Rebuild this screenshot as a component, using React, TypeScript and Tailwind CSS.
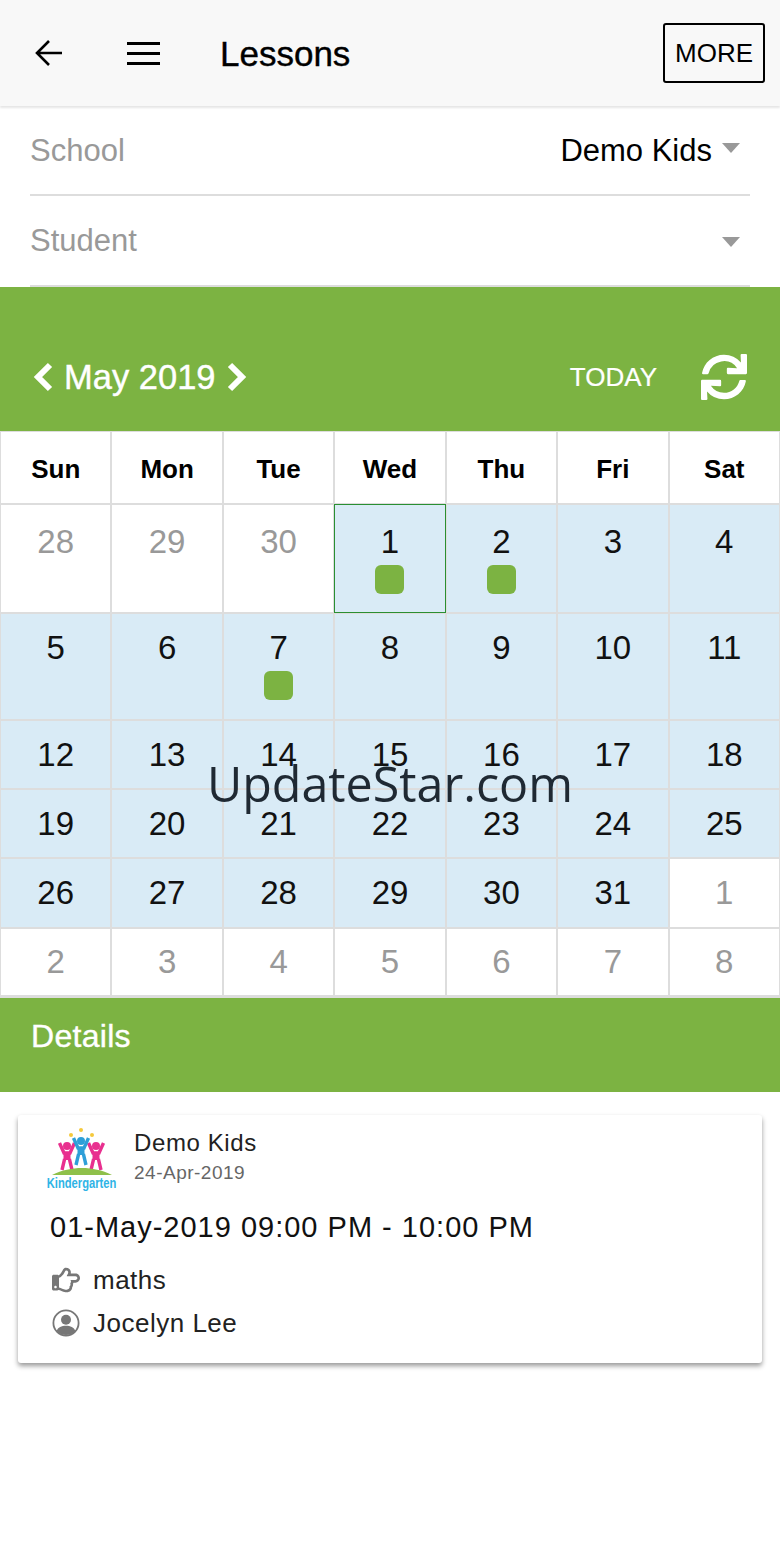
import { FaRegHandPointRight, FaSync } from "react-icons/fa";

type Day = { label: number; muted?: boolean; lesson?: boolean; selected?: boolean };

const weekDays = ["Sun", "Mon", "Tue", "Wed", "Thu", "Fri", "Sat"];

const range = (from: number, to: number, muted = false): Day[] =>
  Array.from({ length: to - from + 1 }, (_, i) => ({ label: from + i, muted }));

const days: Day[] = [...range(28, 30, true), ...range(1, 31), ...range(1, 8, true)].map((d, i) =>
  !d.muted && (d.label === 1 || d.label === 2 || d.label === 7)
    ? { ...d, lesson: true, selected: d.label === 1 && i === 3 }
    : d
);

// heights and number offsets differ per week row
const rowStyles = [
  "h-[107px] pt-[15px]",
  "h-[105px] pt-[12px]",
  "h-[67px] pt-[12px]",
  "h-[67px] pt-[12px]",
  "h-[68px] pt-[12px]",
  "h-[66px] pt-[11px]",
];

const Kid = ({ x, y, color }: { x: number; y: number; color: string }) => (
  <g transform={`translate(${x} ${y})`} stroke={color} fill="none" strokeWidth="3.4">
    <circle cx="0" cy="4" r="4" fill={color} stroke="none" />
    <path d="M-7.5 1L-3 11H3L7.5 1" />
    <path d="M0 10V18" strokeWidth="7" />
    <path d="M-2.4 17L-5 28M2.4 17L5 28" />
  </g>
);

const KidsLogo = () => (
  <div className="flex w-[64px] flex-col items-center">
    <svg width="64" height="48" viewBox="0 0 64 48">
      <circle cx="21" cy="7" r="2" fill="#f5c93c" />
      <circle cx="31" cy="2" r="2" fill="#f5c93c" />
      <circle cx="42" cy="7" r="2" fill="#f5c93c" />
      <Kid x={17} y={14} color="#e8308f" />
      <Kid x={46} y={14} color="#e8308f" />
      <Kid x={31} y={9} color="#2e9fd8" />
      <path d="M2 47c10-5 20-7 30-7s20 2 30 7z" fill="#8fc04a" />
    </svg>
    <span className="scale-x-[0.8] whitespace-nowrap text-[14px] leading-[15px] font-bold text-[#2fb4e6]">
      Kindergarten
    </span>
  </div>
);

const PersonIcon = () => (
  <svg width="28" height="28" viewBox="0 0 28 28">
    <circle cx="14" cy="14" r="12.6" fill="none" stroke="#777" strokeWidth="1.8" />
    <circle cx="14" cy="10.8" r="5" fill="#777" />
    <path d="M4.6 22c1.4-3.8 5-5.2 9.4-5.2s8 1.4 9.4 5.2c-2.3 2.6-5.6 4-9.4 4s-7.1-1.4-9.4-4z" fill="#777" />
  </svg>
);

const Caret = () => (
  <span className="h-0 w-0 border-x-[9px] border-t-[10px] border-x-transparent border-t-[#999]" />
);

const Chevron = ({ right }: { right?: boolean }) => (
  <svg width="21" height="30" viewBox="0 0 21 30" fill="none" stroke="#fff" strokeWidth="6">
    <path d={right ? "M4 3l12 12L4 27" : "M17 3L5 15l12 12"} />
  </svg>
);

const App = () => {
  return (
    <div className="relative h-[1560px] w-[780px] overflow-hidden bg-white font-['Liberation_Sans',sans-serif] text-black">
      <header className="relative z-10 flex h-[106px] items-center bg-[#f8f8f8] pl-[35px] pr-[15px] shadow-[0_2px_2px_rgba(0,0,0,0.1)]">
        <svg width="28" height="28" viewBox="0 0 28 28" fill="none" stroke="#000" strokeWidth="2.6">
          <path d="M27 14H3M14 2L2 14l12 12" />
        </svg>
        <div className="ml-[64px] flex w-[33px] flex-col gap-[7px]">
          <span className="h-[3px] bg-black" />
          <span className="h-[3px] bg-black" />
          <span className="h-[3px] bg-black" />
        </div>
        <h1 className="ml-[60px] text-[35px] leading-none [-webkit-text-stroke:0.4px_#000]">Lessons</h1>
        <button className="ml-auto h-[60px] w-[102px] rounded-[3px] border-2 border-black text-center text-[26px]">
          MORE
        </button>
      </header>

      <section className="h-[181px] px-[30px]">
        <div className="flex h-[90px] items-center justify-between border-b-2 border-[#ddd] pt-[2px] text-[31px]">
          <span className="text-[#999]">School</span>
          <span className="flex items-center gap-[10px]">
            Demo Kids
            <span className="mr-[10px] mb-[6px] flex">
              <Caret />
            </span>
          </span>
        </div>
        <div className="flex h-[91px] items-center justify-between border-b-2 border-[#ddd] pt-[2px] text-[31px]">
          <span className="text-[#999]">Student</span>
          <span className="mr-[10px] flex">
            <Caret />
          </span>
        </div>
      </section>

      <section className="flex h-[144px] items-end bg-[#7cb342] pb-[31px] pl-[33px] pr-[33px] text-white">
        <div className="flex items-center">
          <Chevron />
          <span className="ml-[10px] text-[34.5px] leading-[46px] [-webkit-text-stroke:0.4px_#fff]">May 2019</span>
          <span className="ml-[10px] flex">
            <Chevron right />
          </span>
        </div>
        <span className="ml-auto text-[26px] leading-[46px] [-webkit-text-stroke:0.2px_#fff]">TODAY</span>
        <FaSync className="ml-[44px] text-[46px]" />
      </section>

      <section className="grid grid-cols-7 gap-[2px] border-b-[2px] border-[#ddd] bg-[#ddd] px-[1px] pt-[1px] pb-[1px]">
        {weekDays.map((d) => (
          <div key={d} className="flex h-[71px] items-center justify-center bg-white pt-[4px] text-[26px] font-bold">
            {d}
          </div>
        ))}
        {days.map((d, i) => (
          <div
            key={i}
            className={`relative flex flex-col items-center ${rowStyles[Math.floor(i / 7)]} ${
              d.muted ? "bg-white text-[#999]" : "bg-[#d9ebf6] text-[#111]"
            } ${d.selected ? "z-[1] outline-[1.5px] outline-offset-0 outline-[#2a8f32]" : ""}`}
          >
            <span className="text-[33px] leading-[44px]">{d.label}</span>
            {d.lesson && <span className="mt-[1px] h-[29px] w-[29px] rounded-[6px] bg-[#7cb342]" />}
          </div>
        ))}
      </section>

      <section className="flex h-[94px] items-center bg-[#7cb342] pb-[18px] pl-[31px] text-[32px] tracking-[0.3px] text-white [-webkit-text-stroke:0.4px_#fff]">
        Details
      </section>

      <article className="mx-[18px] mt-[23px] h-[248px] w-[744px] rounded-[3px] bg-white px-[32px] pt-[13px] shadow-[0_3px_5px_rgba(0,0,0,0.4)]">
        <div className="flex">
          <KidsLogo />
          <div className="ml-[20px] pt-[1px]">
            <p className="text-[24px] leading-[28px] tracking-[0.6px] text-[#222]">Demo Kids</p>
            <p className="mt-[4px] text-[19px] leading-[24px] tracking-[0.5px] text-[#666]">24-Apr-2019</p>
          </div>
        </div>
        <p className="mt-[18px] text-[29px] leading-[36px] tracking-[1px] text-[#111]">01-May-2019 09:00 PM - 10:00 PM</p>
        <div className="mt-[17px] flex h-[36px] items-center">
          <FaRegHandPointRight className="ml-[2px] text-[28px] text-[#777]" />
          <span className="ml-[13px] text-[26px] tracking-[0.5px] text-[#222]">maths</span>
        </div>
        <div className="mt-[7px] flex h-[36px] items-center">
          <span className="ml-[2px] flex">
            <PersonIcon />
          </span>
          <span className="ml-[13px] text-[26px] tracking-[0.5px] text-[#222]">Jocelyn Lee</span>
        </div>
      </article>

      <div className="pointer-events-none absolute top-[749px] left-0 z-20 w-full text-center font-['Open_Sans',sans-serif] text-[48.4px] leading-[68px] text-[#1f2933]">
        UpdateStar.com
      </div>
    </div>
  );
};

export default App;
